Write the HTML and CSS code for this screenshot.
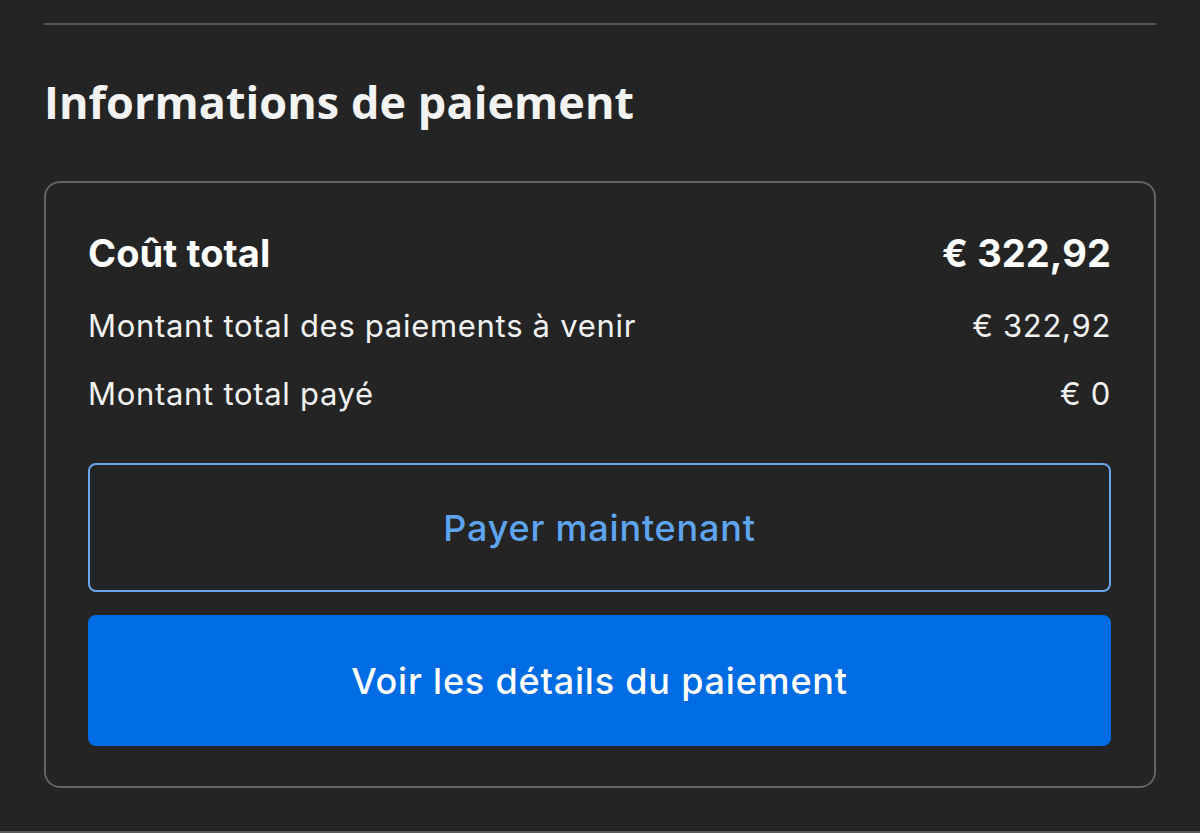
FILE: index.html
```html
<!DOCTYPE html>
<html lang="fr">
<head>
<meta charset="utf-8">
<link rel="stylesheet" href="styles.css">
</head>
<body>
<div class="page">
  <div class="divider"></div>
  <h1 class="title">Informations de paiement</h1>
  <section class="card">
    <div class="row row-total">
      <span>Coût total</span>
      <span>€ 322,92</span>
    </div>
    <div class="row row-sub row-2">
      <span>Montant total des paiements à venir</span>
      <span>€ 322,92</span>
    </div>
    <div class="row row-sub row-3">
      <span>Montant total payé</span>
      <span>€ 0</span>
    </div>
    <div class="actions">
      <button class="btn btn-outline">Payer maintenant</button>
      <button class="btn btn-primary">Voir les détails du paiement</button>
    </div>
  </section>
</div>
<div class="bottom-line"></div>
</body>
</html>
```
FILE: styles.css
```css
html, body {
  margin: 0;
  padding: 0;
  background: #242424;
}
body {
  width: 1200px;
  height: 833px;
  overflow: hidden;
  font-family: Inter, "Liberation Sans", sans-serif;
  color: #f4f4f4;
  display: flex;
  flex-direction: column;
}
.page {
  padding: 23px 44px 0;
}
.divider {
  height: 2px;
  background: #555555;
}
.title {
  margin: 49px 0 0 0;
  font-family: "Open Sans", sans-serif;
  font-weight: 700;
  font-size: 45px;
  line-height: 56px;
  color: #f3f3f3;
  letter-spacing: 0.05px;
}
.card {
  margin-top: 51px;
  border: 2px solid #626262;
  border-radius: 16px;
  padding: 46px 43px 40px 42px;
  height: 607px;
  box-sizing: border-box;
}
.row {
  display: flex;
  justify-content: space-between;
  align-items: baseline;
}
.row-total {
  font-size: 38px;
  font-weight: 700;
  line-height: 48px;
  letter-spacing: 0.1px;
  color: #ffffff;
}
.row-sub {
  font-size: 31px;
  font-weight: 400;
  line-height: 40px;
  letter-spacing: 0.7px;
  color: #f2f2f2;
}
.row-2 { margin-top: 29px; }
.row-3 { margin-top: 28px; }
.actions {
  margin-top: 49px;
  display: flex;
  flex-direction: column;
  gap: 23px;
}
.btn {
  font-family: Inter, "Liberation Sans", sans-serif;
  font-size: 36px;
  font-weight: 500;
  letter-spacing: 0.8px;
  border-radius: 8px;
  box-sizing: border-box;
  width: 1023px;
  margin-left: 0;
  cursor: pointer;
}
.btn-outline {
  height: 129px;
  background: transparent;
  border: 2.5px solid #6aa6ec;
  color: #5fa4f0;
}
.btn-primary {
  height: 131px;
  background: #006ce4;
  border: none;
  color: #ffffff;
}
.bottom-line {
  margin-top: auto;
  height: 2px;
  background: #5a5a5a;
}
```
